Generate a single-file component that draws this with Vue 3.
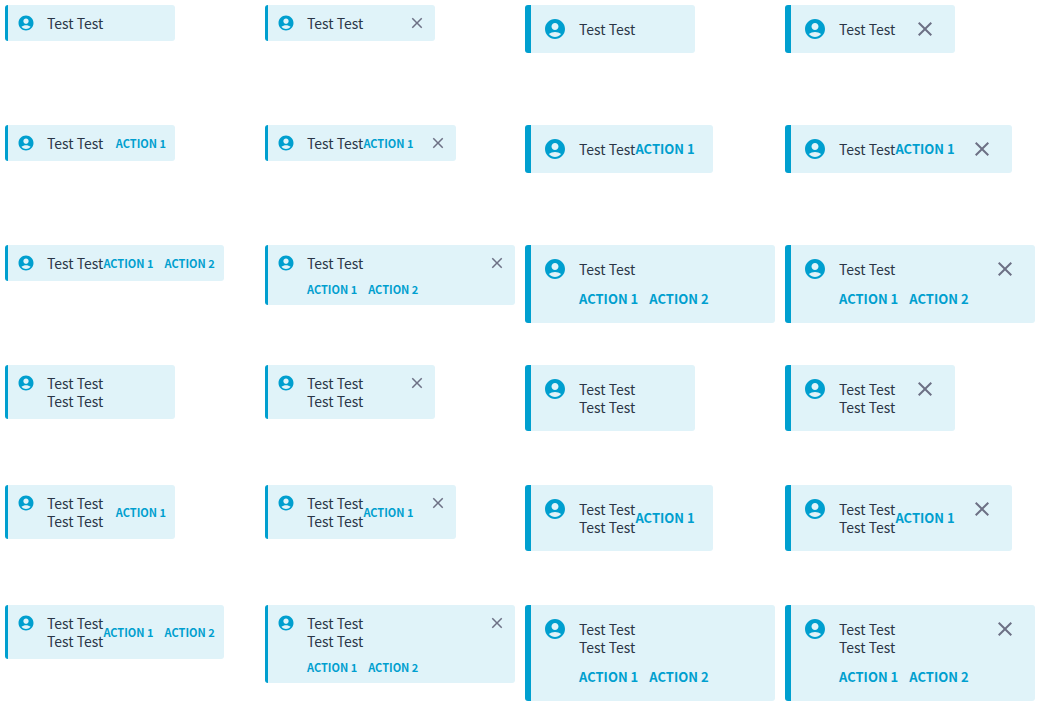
<script setup>
const variants = [
  { large: false, closable: false },
  { large: false, closable: true },
  { large: true, closable: false },
  { large: true, closable: true },
]

const cards = []
for (const lines of [1, 2]) {
  for (const count of [0, 1, 2]) {
    for (const variant of variants) {
      cards.push({
        ...variant,
        lines,
        actions: Array.from({ length: count }, (_, i) => `ACTION ${i + 1}`),
        stacked: count === 2 && (variant.large || variant.closable),
      })
    }
  }
}
</script>

<template>
  <main class="gallery">
    <div v-for="(card, index) in cards" :key="index" class="cell">
      <section class="banner" :class="{ large: card.large, stacked: card.stacked }">
        <svg class="icon" viewBox="0 0 24 24" aria-hidden="true">
          <path d="M12 2C6.48 2 2 6.48 2 12s4.48 10 10 10 10-4.48 10-10S17.52 2 12 2zm0 4c1.93 0 3.5 1.57 3.5 3.5S13.93 13 12 13s-3.5-1.57-3.5-3.5S10.07 6 12 6zm0 14c-2.03 0-4.43-.82-6.14-2.88C7.55 15.8 9.68 15 12 15s4.45.8 6.14 2.12C16.43 19.18 14.03 20 12 20z" />
        </svg>
        <div class="body">
          <div class="text">
            <div v-for="line in card.lines" :key="line">Test Test</div>
          </div>
          <div v-if="card.actions.length" class="actions">
            <button v-for="action in card.actions" :key="action" type="button" class="action">{{ action }}</button>
          </div>
        </div>
        <button v-if="card.closable" type="button" class="close" aria-label="Close">
          <svg viewBox="0 0 24 24" aria-hidden="true">
            <path d="M19 6.41L17.59 5 12 10.59 6.41 5 5 6.41 10.59 12 5 17.59 6.41 19 12 13.41 17.59 19 19 17.59 13.41 12z" />
          </svg>
        </button>
      </section>
    </div>
  </main>
</template>

<style>
body {
  margin: 0;
  background: #fff;
}
</style>

<style scoped>
.gallery {
  display: grid;
  grid-template-columns: repeat(4, 1fr);
  grid-auto-rows: 120px;
  font-family: "Noto Sans CJK SC", sans-serif;
}
.cell {
  display: flex;
  align-items: flex-start;
  padding: 5px;
}
.banner {
  box-sizing: border-box;
  display: flex;
  align-items: flex-start;
  min-width: 170px;
  padding: 9px;
  border-left: 3px solid #009fcf;
  border-radius: 3px;
  background: #e0f3f9;
  color: #2b3647;
  font-size: 14px;
  line-height: 18px;
  white-space: nowrap;
}
.banner.stacked {
  width: 100%;
}
.icon {
  flex: none;
  width: 18px;
  height: 18px;
  margin-right: 12px;
  fill: #009fcf;
}
.body {
  flex: 1;
  display: flex;
  align-items: center;
  justify-content: space-between;
}
.stacked .body {
  flex-direction: column;
  align-items: flex-start;
  gap: 10px;
}
.actions {
  display: flex;
  gap: 11px;
}
.action {
  padding: 0;
  border: 0;
  background: none;
  color: #009fcf;
  font: 700 11px/14px "Noto Sans CJK SC", sans-serif;
  cursor: pointer;
}
.close {
  flex: none;
  display: flex;
  margin-left: 15px;
  padding: 0;
  border: 0;
  background: none;
  cursor: pointer;
}
.close svg {
  width: 18px;
  height: 18px;
  fill: #6d7085;
}
.large {
  padding: 12px 18px 12px 12px;
  border-left-width: 6px;
}
.large .icon,
.large .close svg {
  width: 24px;
  height: 24px;
}
.large .body {
  padding: 3px 0;
}
.large.stacked .body {
  gap: 12px;
}
.large .action {
  font-size: 13px;
  line-height: 18px;
}
</style>
